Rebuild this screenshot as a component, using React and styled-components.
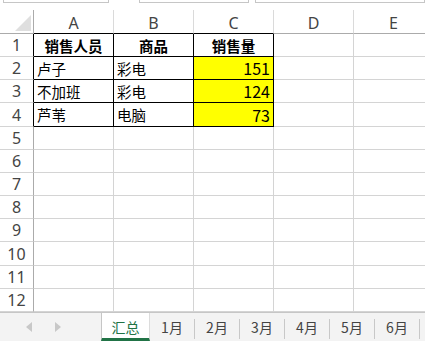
import React from "react";
import styled, { createGlobalStyle } from "styled-components";

const GlobalStyle = createGlobalStyle`
  html, body {
    margin: 0;
    padding: 0;
    background: #fff;
    overflow: hidden;
  }
  body {
    font-family: "Noto Sans CJK SC", "Noto Sans", sans-serif;
  }
`;

const cols = ["A", "B", "C", "D", "E"];

// 표 데이터
const rows = [
  { cells: ["销售人员", "商品", "销售量"], head: true },
  { cells: ["卢子", "彩电", "151"] },
  { cells: ["不加班", "彩电", "124"] },
  { cells: ["芦苇", "电脑", "73"] },
];

const tabs = ["1月", "2月", "3月", "4月", "5月", "6月"];

export default function App() {
  const totalRows = 12;
  return (
    <Page>
      <GlobalStyle />
      <FormulaStrip>
        <FormulaBox w="104px" ml="3px" />
        <FormulaBox w="108px" ml="30px" />
        <FormulaBox w="180px" ml="6px" />
      </FormulaStrip>
      <Sheet>
        <Corner>
          <CornerMark />
        </Corner>
        {cols.map((c, i) => (
          <ColHead key={c} boxed={i < 3}>
            {c}
          </ColHead>
        ))}
        {Array.from({ length: totalRows }).map((_, r) => {
          const data = rows[r];
          return (
            <React.Fragment key={r}>
              <RowHead boxed={!!data}>{r + 1}</RowHead>
              {cols.map((c, ci) => {
                const value = data && ci < 3 ? data.cells[ci] : "";
                const isNum = data && !data.head && ci === 2;
                return (
                  <Cell
                    key={c}
                    boxed={!!data && ci < 3}
                    bold={data && data.head}
                    num={isNum}
                    align={data && data.head ? "center" : isNum ? "right" : "left"}
                    fill={isNum ? "#ffff00" : "transparent"}
                  >
                    {value}
                  </Cell>
                );
              })}
            </React.Fragment>
          );
        })}
      </Sheet>
      <TabBar>
        <TabNav>
          <Arrow viewBox="0 0 6 10">
            <polygon points="6,0 0,5 6,10" />
          </Arrow>
          <Arrow viewBox="0 0 6 10">
            <polygon points="0,0 6,5 0,10" />
          </Arrow>
        </TabNav>
        <ActiveTab>汇总</ActiveTab>
        {tabs.map((t) => (
          <React.Fragment key={t}>
            <Tab>{t}</Tab>
            <Sep />
          </React.Fragment>
        ))}
      </TabBar>
    </Page>
  );
}

const Page = styled.div`
  width: 425px;
  height: 341px;
  display: flex;
  flex-direction: column;
  overflow: hidden;
  background: #fff;
`;

const FormulaStrip = styled.div`
  height: 10px;
  display: flex;
  align-items: flex-start;
  flex-shrink: 0;
`;

const FormulaBox = styled.div`
  width: ${(p) => p.w};
  margin-left: ${(p) => p.ml};
  height: 2px;
  border: 1px solid #c6c6c6;
  border-top: none;
  flex-shrink: 0;
  &:last-child {
    flex: 1;
  }
`;

const Sheet = styled.div`
  height: 302px;
  flex-shrink: 0;
  display: grid;
  grid-template-columns: 34px repeat(5, 80px);
  grid-template-rows: 24px repeat(12, 1fr);
  overflow: hidden;
  width: 434px;
`;

const Corner = styled.div`
  box-sizing: border-box;
  border-right: 1px solid #ababab;
  border-bottom: 1px solid #ababab;
  display: flex;
  justify-content: flex-end;
  align-items: flex-end;
  padding: 0 2px 2px 0;
`;

const CornerMark = styled.div`
  width: 16px;
  height: 16px;
  background: #dfdfdf;
  clip-path: polygon(100% 0, 100% 100%, 0 100%);
`;

const ColHead = styled.div`
  box-sizing: border-box;
  border-right: 1px solid #dadada;
  border-bottom: 1px solid ${(p) => (p.boxed ? "#000" : "#ababab")};
  display: flex;
  align-items: center;
  justify-content: center;
  font-family: "Noto Sans", "Noto Sans CJK SC", sans-serif;
  font-size: 16px;
  color: #444;
  padding-top: 2px;
`;

const RowHead = styled.div`
  box-sizing: border-box;
  border-right: 1px solid ${(p) => (p.boxed ? "#000" : "#ababab")};
  border-bottom: 1px solid #d4d4d4;
  display: flex;
  align-items: center;
  justify-content: center;
  font-family: "Noto Sans", "Noto Sans CJK SC", sans-serif;
  font-size: 16px;
  color: #444;
`;

const Cell = styled.div`
  box-sizing: border-box;
  border-right: 1px solid ${(p) => (p.boxed ? "#000" : "#d4d4d4")};
  border-bottom: 1px solid ${(p) => (p.boxed ? "#000" : "#d4d4d4")};
  background: ${(p) => p.fill};
  display: flex;
  align-items: center;
  justify-content: ${(p) =>
    p.align === "center" ? "center" : p.align === "right" ? "flex-end" : "flex-start"};
  padding: 0 3px;
  font-size: ${(p) => (p.num ? "16px" : "14.5px")};
  font-weight: ${(p) => (p.bold ? 700 : 400)};
  color: #000;
  white-space: nowrap;
  overflow: hidden;
`;

const TabBar = styled.div`
  height: 29px;
  box-sizing: border-box;
  border-top: 1px solid #c6c6c6;
  background: #f3f3f3;
  display: flex;
  align-items: stretch;
  flex-shrink: 0;
`;

const TabNav = styled.div`
  width: 101px;
  flex-shrink: 0;
  display: flex;
  align-items: center;
  padding-left: 26px;
  gap: 23px;
  box-sizing: border-box;
`;

const Arrow = styled.svg`
  width: 6px;
  height: 10px;
  fill: #c8c8c8;
`;

const ActiveTab = styled.div`
  width: 49px;
  box-sizing: border-box;
  background: #fff;
  border-left: 1px solid #c6c6c6;
  border-right: 1px solid #dcdcdc;
  border-bottom: 3px solid #217346;
  display: flex;
  align-items: center;
  justify-content: center;
  padding-top: 2px;
  color: #217346;
  font-size: 14px;
  flex-shrink: 0;
`;

const Tab = styled.div`
  width: 44px;
  display: flex;
  align-items: center;
  justify-content: center;
  color: #444;
  font-size: 14px;
  flex-shrink: 0;
`;

const Sep = styled.div`
  width: 1px;
  height: 20px;
  align-self: center;
  margin-top: 3px;
  background: #c8c8c8;
  flex-shrink: 0;
`;
